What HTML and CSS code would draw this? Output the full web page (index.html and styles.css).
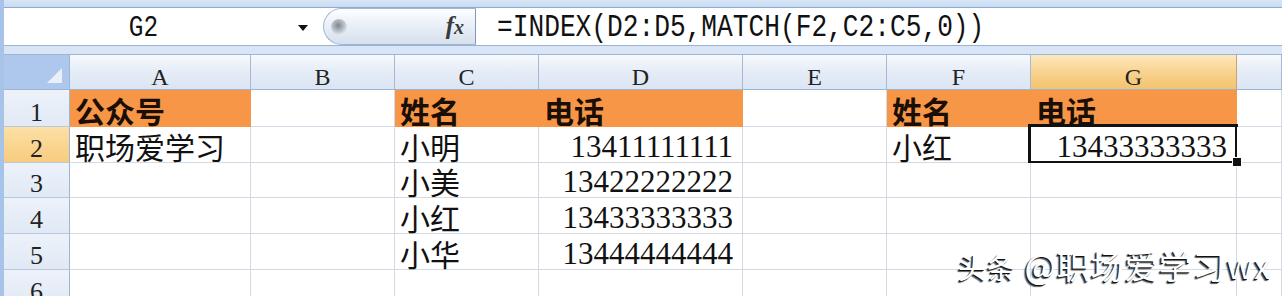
FILE: index.html
```html
<!DOCTYPE html>
<html lang="zh">
<head>
<meta charset="utf-8">
<title>INDEX MATCH</title>
<link rel="stylesheet" href="styles.css">
</head>
<body>
<div class="window">
  <div class="topstrip"></div>
  <div class="fbar">
    <div class="namebox"><span class="nb-text"><span class="mono nb">G2</span></span><span class="arrow"></span></div>
    <div class="fxbtn"><span class="knob"></span><span class="fx">f<span class="fx-x">x</span></span></div>
    <div class="formula"><span class="mono fm">=INDEX(D2:D5,MATCH(F2,C2:C5,0))</span></div>
  </div>
  <div class="gap"></div>
  <div class="sheet">
    <div class="c corner"><span class="tri"></span></div>
    <div class="c ch">A</div>
    <div class="c ch">B</div>
    <div class="c ch">C</div>
    <div class="c ch">D</div>
    <div class="c ch">E</div>
    <div class="c ch">F</div>
    <div class="c ch hl-col">G</div>
    <div class="c ch"></div>

    <div class="c rh">1</div>
    <div class="c or">公众号</div>
    <div class="c"></div>
    <div class="c or">姓名</div>
    <div class="c or">电话</div>
    <div class="c"></div>
    <div class="c or">姓名</div>
    <div class="c or">电话</div>
    <div class="c"></div>

    <div class="c rh hl-row">2</div>
    <div class="c">职场爱学习</div>
    <div class="c"></div>
    <div class="c">小明</div>
    <div class="c num"><span class="n">13411111111</span></div>
    <div class="c"></div>
    <div class="c">小红</div>
    <div class="c num sel"><span class="n">13433333333</span></div>
    <div class="c"></div>

    <div class="c rh">3</div>
    <div class="c"></div>
    <div class="c"></div>
    <div class="c">小美</div>
    <div class="c num"><span class="n">13422222222</span></div>
    <div class="c"></div>
    <div class="c"></div>
    <div class="c"></div>
    <div class="c"></div>

    <div class="c rh">4</div>
    <div class="c"></div>
    <div class="c"></div>
    <div class="c">小红</div>
    <div class="c num"><span class="n">13433333333</span></div>
    <div class="c"></div>
    <div class="c"></div>
    <div class="c"></div>
    <div class="c"></div>

    <div class="c rh">5</div>
    <div class="c"></div>
    <div class="c"></div>
    <div class="c">小华</div>
    <div class="c num"><span class="n">13444444444</span></div>
    <div class="c"></div>
    <div class="c"></div>
    <div class="c"></div>
    <div class="c"></div>

    <div class="c rh rh6">6</div>
    <div class="c"></div>
    <div class="c"></div>
    <div class="c"></div>
    <div class="c"></div>
    <div class="c"></div>
    <div class="c"></div>
    <div class="c"></div>
    <div class="c"></div>
  </div>
  <div class="wm"><span class="wm-small">头条</span> @职场爱学习wx</div>
</div>
</body>
</html>
```
FILE: styles.css
```css
* { box-sizing: border-box; margin: 0; padding: 0; }
html, body { width: 1282px; height: 296px; overflow: hidden; background: #fff; }
body { font-family: "Noto Sans CJK SC", sans-serif; color: #111; }

.window {
  position: relative;
  height: 296px;
  border-left: 4px solid #a7c3e7;
  display: flex;
  flex-direction: column;
  overflow: hidden;
}

.topstrip {
  height: 8px;
  flex: none;
  background: linear-gradient(#d7e6f7, #c7dbf1);
  border-bottom: 1px solid #8eaad0;
}

.fbar {
  height: 38px;
  flex: none;
  display: flex;
  background: #fff;
  border-bottom: 1px solid #9bb3d3;
}

.mono { font-family: "Liberation Mono", monospace; display: inline-block; white-space: nowrap; }

.namebox { width: 319px; display: flex; align-items: center; }
.nb-text { width: 279px; text-align: center; }
.nb { font-size: 29px; line-height: 30px; transform: scaleX(.84); padding-top: 4px; }
.arrow {
  margin-left: 15px;
  width: 0; height: 0;
  border-left: 5px solid transparent;
  border-right: 5px solid transparent;
  border-top: 6px solid #111;
  margin-top: 2px;
}

.fxbtn {
  width: 153px;
  height: 37px;
  display: flex;
  align-items: center;
  padding-left: 7px;
  border: 1px solid #a3b6cf;
  border-right-color: #8199b8;
  border-radius: 19px 0 0 19px;
  background: linear-gradient(#fdfeff, #e6edf6 55%, #d6e0ec);
}
.knob {
  width: 16px; height: 16px; border-radius: 50%;
  background: radial-gradient(circle at 45% 40%, #80868e, #b9bfc7 45%, #eef1f5 80%);
}
.fx {
  margin-left: auto;
  margin-right: 11px;
  font-family: "Liberation Serif", serif;
  font-style: italic;
  font-weight: bold;
  font-size: 25px;
  line-height: 24px;
  color: #3a3a3a;
}
.fx-x { font-size: 20px; }

.formula { flex: 1; padding-left: 21px; display: flex; align-items: center; }
.fm { font-size: 31px; line-height: 30px; transform: scaleX(.845); transform-origin: left center; padding-top: 3px; }

.gap {
  height: 9px;
  flex: none;
  background: #d7e5f6;
  border-bottom: 1px solid #9eb5d4;
}

.sheet {
  display: grid;
  grid-template-columns: 66px 181px 144px 144px 204px 144px 144px 206px 45px;
  grid-template-rows: 35px 37px 36px 35px 36px 36px 36px;
}

.c {
  position: relative;
  border-right: 1px solid #d3dae6;
  border-bottom: 1px solid #d3dae6;
  display: flex;
  align-items: flex-end;
  padding: 0 0 1px 5px;
  font-size: 30px;
  line-height: 30px;
  white-space: nowrap;
  background: #fff;
}

.corner {
  background: #adc8ec;
  border-right-color: #9db5d3;
  border-bottom-color: #9db5d3;
  justify-content: flex-end;
  padding: 0 7px 6px 0;
}
.tri {
  width: 15px; height: 15px;
  background: #e9f0fa;
  clip-path: polygon(100% 0, 100% 100%, 0 100%);
}

.ch {
  background: linear-gradient(#f7f9fd, #e5ecf7 50%, #dbe5f3);
  border-right-color: #a3b9d5;
  border-bottom-color: #9cb4d3;
  justify-content: center;
  padding: 0;
  font-family: "Liberation Serif", serif;
  font-size: 24px;
  line-height: 24px;
  color: #222;
}
.hl-col { background: linear-gradient(#fde9bf, #f9d38f 50%, #f4c36d); border-right-color: #c9a670; }

.rh {
  background: linear-gradient(#edf2fa, #e0e9f5);
  border-right-color: #9db5d3;
  border-bottom-color: #b9c9dd;
  justify-content: center;
  padding: 0;
  font-family: "Liberation Serif", serif;
  font-size: 26px;
  line-height: 26px;
  color: #222;
}
.hl-row { background: linear-gradient(#fde0a6, #f7cc7e); }
.rh6 { align-items: flex-start; padding-top: 9px; }

.or {
  background: #f79646;
  border-right-color: #f79646;
  border-bottom-color: #f79646;
  font-weight: 700;
  color: #1a0e05;
}

.num { justify-content: flex-end; padding: 0 9px 1px 0; }
.n {
  font-family: "Liberation Serif", serif;
  font-size: 31px;
  line-height: 28px;
}

.sel::after {
  content: "";
  position: absolute;
  left: -3px; top: -3px; right: -2px; bottom: -2px;
  border: 3px solid #111;
}
.sel::before {
  content: "";
  position: absolute;
  right: -6px; bottom: -5px;
  width: 8px; height: 8px;
  background: #111;
  border: 1px solid #fff;
  z-index: 2;
}

.wm {
  position: absolute;
  left: 954px;
  top: 245px;
  font-size: 33px;
  line-height: 40px;
  color: #fff;
  white-space: nowrap;
  text-shadow: -1px 1px 0 #111, -2px 2px 1px rgba(0,0,0,.65);
  letter-spacing: 1px;
}
.wm-small { font-size: 28px; }
```
